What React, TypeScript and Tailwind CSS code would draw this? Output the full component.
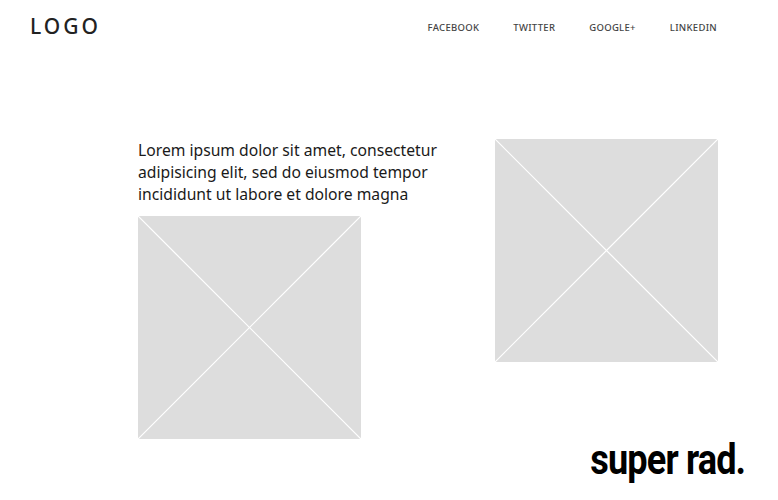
import React from 'react';

const Placeholder: React.FC = () => (
    <div className="w-[223px] h-[223px] bg-[#dddddd] shrink-0">
        <svg width="223" height="223" viewBox="0 0 223 223" className="block">
            <line x1="0" y1="0" x2="223" y2="223" stroke="#ffffff" strokeWidth="1.2" />
            <line x1="223" y1="0" x2="0" y2="223" stroke="#ffffff" strokeWidth="1.2" />
        </svg>
    </div>
);

const navItems = ['FACEBOOK', 'TWITTER', 'GOOGLE+', 'LINKEDIN'];

export default function App() {
    return (
        <div className="w-[778px] h-[500px] bg-white overflow-hidden flex flex-col font-['Noto_Sans',sans-serif]">
            {/* Header */}
            <header className="flex items-center justify-between h-[54px] pl-[30px] pr-[61px]">
                <div className="text-[21px] font-medium tracking-[3px] text-[#222222]">LOGO</div>
                <nav className="flex gap-[34px] mt-[3px] text-[9.5px] font-medium tracking-[0.3px] text-[#444444]">
                    {navItems.map((item) => (
                        <span key={item}>{item}</span>
                    ))}
                </nav>
            </header>

            {/* Content */}
            <main className="flex pl-[138px] mt-[86px]">
                <div className="w-[340px] flex flex-col gap-[11px]">
                    <p className="text-[15.7px] leading-[22px] text-[#1a1a1a]">
                        Lorem ipsum dolor sit amet, consectetur<br />
                        adipisicing elit, sed do eiusmod tempor<br />
                        incididunt ut labore et dolore magna
                    </p>
                    <Placeholder />
                </div>
                <div className="ml-[17px]">
                    <Placeholder />
                </div>
            </main>

            <div className="flex justify-end pr-[33px] mt-auto mb-[19px]">
                <span className="inline-block origin-right scale-x-[0.86] text-[42px] leading-none font-bold tracking-[-1px] text-black font-['Roboto',sans-serif]">
                    super rad.
                </span>
            </div>
        </div>
    );
}
